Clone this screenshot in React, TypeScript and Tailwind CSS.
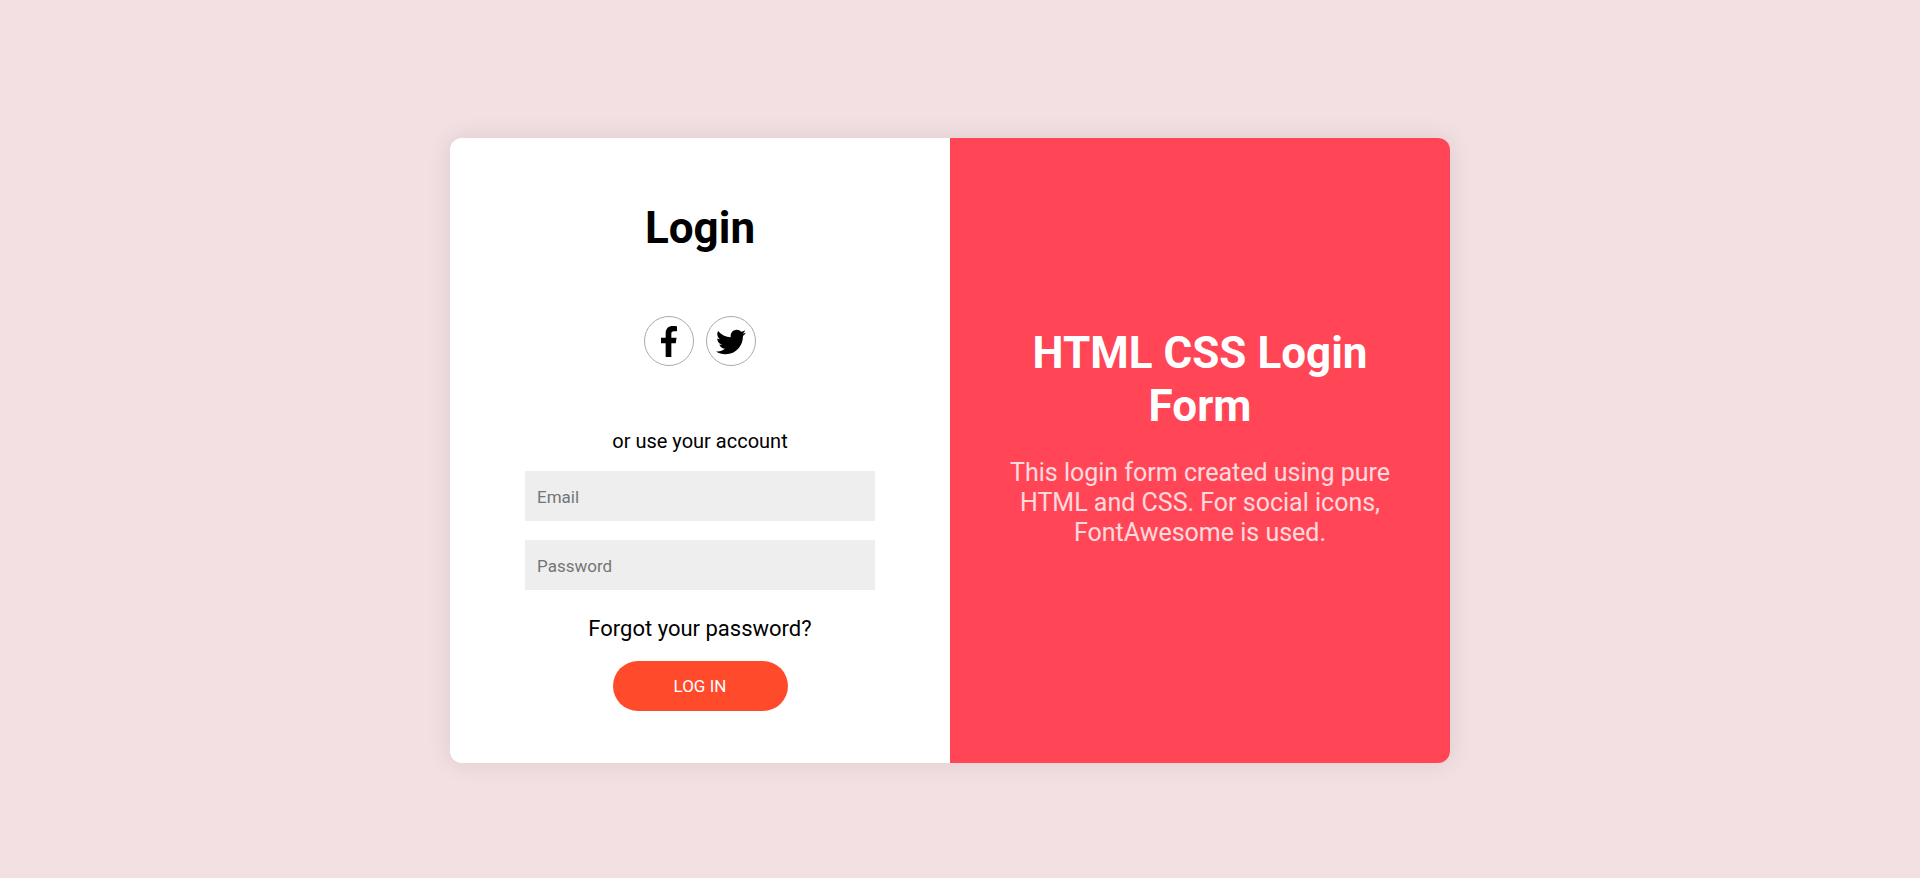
import type { ReactNode } from "react";
import { FaTwitter } from "react-icons/fa";

function FacebookIcon() {
  return (
    <svg viewBox="0 0 264 512" className="h-[31px] w-4" fill="currentColor" aria-hidden="true">
      <path d="M76.7 512V283H0v-91h76.7v-71.7C76.7 42.4 124.3 0 193.8 0c33.3 0 61.9 2.5 70.2 3.6V85h-48.2c-37.8 0-45.1 18-45.1 44.3V192H256l-11.7 91h-73.6v229" />
    </svg>
  );
}

function SocialLink({ label, children }: { label: string; children: ReactNode }) {
  return (
    <a
      href="#"
      aria-label={label}
      className="flex size-[50px] items-center justify-center rounded-full border border-[#aaa] pt-0.5"
    >
      {children}
    </a>
  );
}

export default function App() {
  return (
    <main className="flex min-h-screen items-center justify-center bg-[#f3e0e2] pt-[22px] pr-5 font-['Roboto',sans-serif] text-black">
      <div className="grid w-full max-w-[1000px] grid-cols-1 overflow-hidden rounded-xl shadow-[0_0_24px_rgba(0,0,0,0.1)] md:grid-cols-2">
        <form
          className="flex flex-col items-center bg-white px-[75px] pt-16 pb-[52px]"
          onSubmit={(e) => e.preventDefault()}
        >
          <h1 className="text-[44px] leading-[53px] font-bold">Login</h1>
          <div className="mt-[61px] flex gap-3">
            <SocialLink label="Facebook">
              <FacebookIcon />
            </SocialLink>
            <SocialLink label="Twitter">
              <FaTwitter className="size-[30px]" />
            </SocialLink>
          </div>
          <p className="mt-[63px] text-xl leading-6">or use your account</p>
          <input
            type="email"
            aria-label="Email"
            placeholder="Email"
            className="mt-[18px] h-[50px] w-full bg-[#eee] px-3 pt-0.5 text-[17px] placeholder:text-[#757575]"
          />
          <input
            type="password"
            aria-label="Password"
            placeholder="Password"
            className="mt-[19px] h-[50px] w-full bg-[#eee] px-3 pt-0.5 text-[17px] placeholder:text-[#757575]"
          />
          <a href="#" className="mt-[25px] text-[22px] leading-7">
            Forgot your password?
          </a>
          <button
            type="submit"
            className="mt-[18px] h-[50px] w-1/2 rounded-full bg-[#ff4b2b] pt-0.5 text-[17px] text-white"
          >
            LOG IN
          </button>
        </form>
        <section className="flex flex-col items-center justify-center bg-[#ff4556] px-[50px] pt-12 pb-[74px] text-center text-white">
          <h2 className="text-[44px] leading-[53px] font-bold">HTML CSS Login Form</h2>
          <p className="mt-[25px] text-[25px] leading-[30px] text-white/80">
            This login form created using pure HTML and CSS. For social icons, FontAwesome is used.
          </p>
        </section>
      </div>
    </main>
  );
}
